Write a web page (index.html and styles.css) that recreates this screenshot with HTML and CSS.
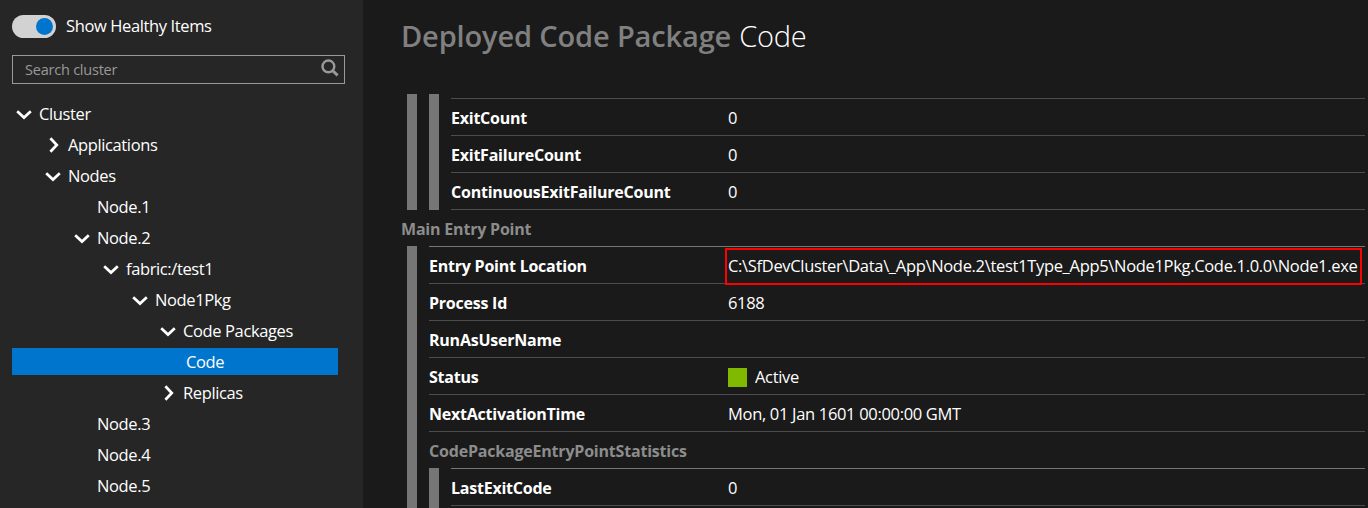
FILE: index.html
```html
<!DOCTYPE html>
<html lang="en">
<head>
<meta charset="utf-8">
<title>Cluster Explorer</title>
<link rel="stylesheet" href="styles.css">
</head>
<body>
<svg class="defs" width="0" height="0">
  <symbol id="down" viewBox="0 0 16 16"><path d="M1.2 5.2 8 11.6 14.8 5.2" fill="none" stroke="#fff" stroke-width="2.7"/></symbol>
  <symbol id="right" viewBox="0 0 16 16"><path d="M5.4 1.2 11.8 8 5.4 14.8" fill="none" stroke="#fff" stroke-width="2.7"/></symbol>
</svg>
<div class="app">
  <aside class="sidebar">
    <div class="toggle-row"><span class="toggle"><span class="knob"></span></span><span class="toggle-label">Show Healthy Items</span></div>
    <div class="search"><span class="placeholder">Search cluster</span>
      <svg class="search-icon" width="18" height="18" viewBox="0 0 18 18" fill="none" stroke="#999"><circle cx="7.4" cy="7.4" r="5.9" stroke-width="2.4"/><path d="M11.5 11.5 16.6 16.3" stroke-width="3"/></svg>
    </div>
    <div class="tree">
      <div class="node l0"><svg class="chev"><use href="#down"/></svg><span>Cluster</span></div>
      <div class="node l1"><svg class="chev"><use href="#right"/></svg><span>Applications</span></div>
      <div class="node l1"><svg class="chev"><use href="#down"/></svg><span>Nodes</span></div>
      <div class="node leaf">Node.1</div>
      <div class="node l2"><svg class="chev"><use href="#down"/></svg><span>Node.2</span></div>
      <div class="node l3"><svg class="chev"><use href="#down"/></svg><span>fabric:/test1</span></div>
      <div class="node l4"><svg class="chev"><use href="#down"/></svg><span>Node1Pkg</span></div>
      <div class="node l5"><svg class="chev"><use href="#down"/></svg><span>Code Packages</span></div>
      <div class="node selected">Code</div>
      <div class="node l5"><svg class="chev"><use href="#right"/></svg><span>Replicas</span></div>
      <div class="node leaf">Node.3</div>
      <div class="node leaf">Node.4</div>
      <div class="node leaf">Node.5</div>
    </div>
  </aside>
  <main class="main">
    <h1 class="title"><span class="kind">Deployed Code Package</span> <span class="name">Code</span></h1>
    <div class="details">
      <div class="group">
        <div class="nested tail">
          <div class="rows">
            <div class="row"><span class="label">ExitCount</span><span>0</span></div>
            <div class="row"><span class="label">ExitFailureCount</span><span>0</span></div>
            <div class="row"><span class="label">ContinuousExitFailureCount</span><span>0</span></div>
          </div>
        </div>
      </div>
      <h2 class="heading">Main Entry Point</h2>
      <div class="group">
        <div class="rows bright">
          <div class="row"><span class="label">Entry Point Location</span><span class="path">C:\SfDevCluster\Data\_App\Node.2\test1Type_App5\Node1Pkg.Code.1.0.0\Node1.exe</span></div>
          <div class="row"><span class="label">Process Id</span><span>6188</span></div>
          <div class="row"><span class="label">RunAsUserName</span></div>
          <div class="row"><span class="label">Status</span><span class="status"></span><span class="active">Active</span></div>
          <div class="row"><span class="label">NextActivationTime</span><span class="date">Mon, 01 Jan 1601 00:00:00 GMT</span></div>
        </div>
        <h2 class="heading stats">CodePackageEntryPointStatistics</h2>
        <div class="nested">
          <div class="rows bright">
            <div class="row"><span class="label">LastExitCode</span><span>0</span></div>
            <div class="row"></div>
          </div>
        </div>
      </div>
    </div>
  </main>
</div>
</body>
</html>
```
FILE: styles.css
```css
* { box-sizing: border-box; }
body { margin: 0; background: #1a1a1a; color: #fff; font: 16.5px/22px "Open Sans", "Noto Sans", sans-serif; letter-spacing: -0.32px; }
.defs { display: block; }
.app { display: flex; height: 508px; overflow: hidden; }
.sidebar { flex: none; width: 363px; padding: 15px 18px 0 12px; background: #262626; letter-spacing: -0.38px; }
.toggle-row { display: flex; align-items: center; height: 23px; gap: 10px; }
.toggle { display: flex; align-items: center; justify-content: flex-end; width: 44px; height: 23px; padding-right: 3px; border-radius: 12px; background: #d2d2d2; }
.toggle-label { padding-bottom: 2px; }
.knob { width: 17px; height: 17px; border-radius: 50%; background: #0075cd; }
.search { display: flex; align-items: center; justify-content: space-between; height: 29px; margin-top: 17px; padding: 0 5px 0 12px; border: 1px solid #999; }
.placeholder { color: #999; font-size: 14.5px; letter-spacing: -0.22px; }
.search-icon { margin-top: -3px; }
.tree { padding-top: 16px; }
.node { display: flex; align-items: center; height: 27px; margin-bottom: 4px; white-space: nowrap; }
.chev { width: 16px; height: 16px; margin-right: 7px; }
.l0 { padding-left: 4px; }
.l1 { padding-left: 33px; }
.l2 { padding-left: 62px; }
.l3 { padding-left: 91px; }
.l4 { padding-left: 120px; }
.l5 { padding-left: 148px; }
.leaf { padding-left: 85px; }
.selected { width: 326px; padding-left: 174px; background: #0075cd; }
.main { flex: 1; min-width: 0; padding: 0 3px 0 38px; }
.title { display: flex; align-items: center; gap: 8px; height: 94px; margin: 0; padding-bottom: 23px; font-size: 29px; line-height: 36px; letter-spacing: -0.15px; white-space: nowrap; }
.kind { color: #808080; font-weight: 600; }
.name { font-weight: 300; letter-spacing: -0.2px; }
.details { height: 414px; overflow: hidden; }
.group { margin-left: 6px; padding-left: 12px; border-left: 10px solid #767676; }
.nested { padding-left: 12px; border-left: 10px solid #767676; }
.tail { padding-top: 4px; }
.rows { border-top: 1px solid #4d4d4d; }
.bright { border-top-color: #767676; }
.row { display: flex; align-items: center; height: 37px; padding-top: 2px; border-bottom: 1px solid #4d4d4d; white-space: nowrap; }
.label { flex: none; width: 299px; font-size: 16px; font-weight: 700; letter-spacing: -0.23px; }
.nested .label { width: 277px; }
.heading { height: 36px; margin: 0; color: #8c8c8c; font-size: 16px; line-height: 38px; font-weight: 700; letter-spacing: -0.2px; }
.path { flex: none; height: 37px; margin: 0 0 0 -3px; padding: 0 3px 0 1px; border: 2px solid #f00; width: 637px; line-height: 31px; }
.status { width: 19px; height: 19px; margin-right: 8px; background: #80b900; }
```
